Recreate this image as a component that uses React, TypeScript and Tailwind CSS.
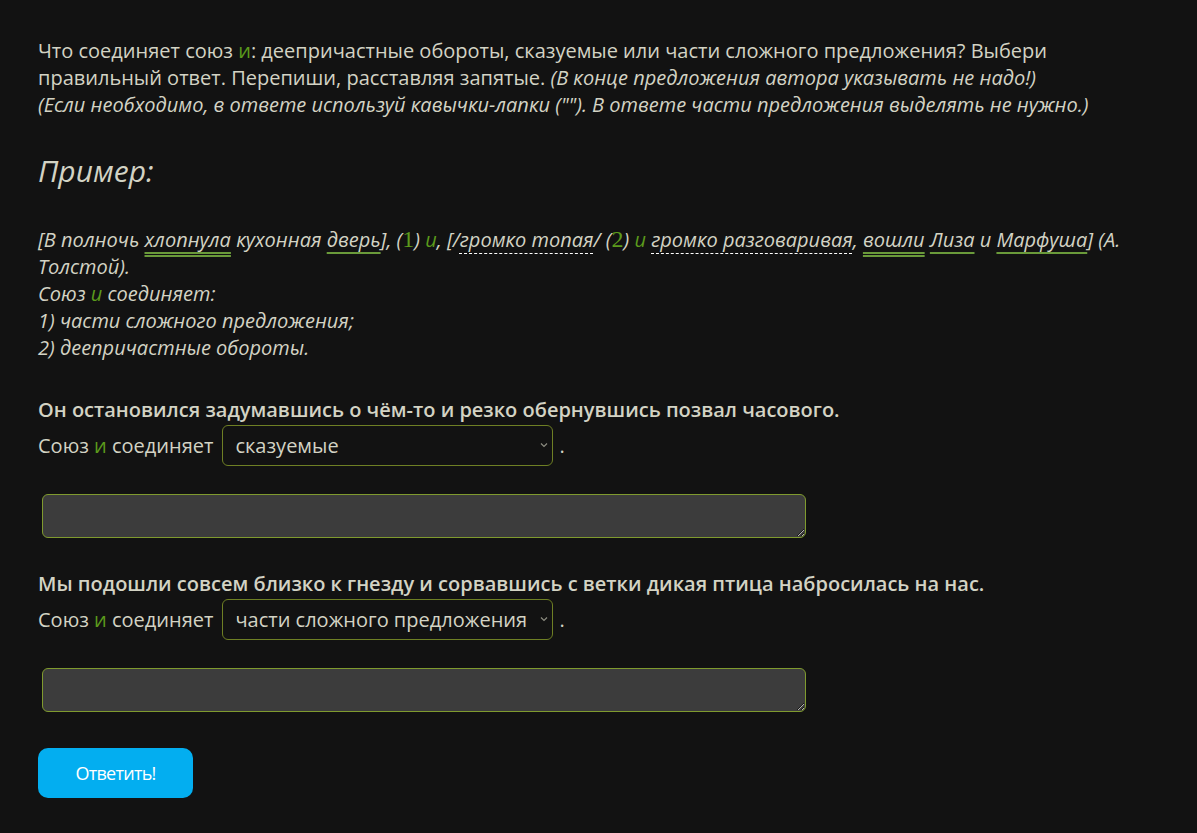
import { useState } from "react";

const G = "text-[#5b9a1c]";

function Num({ n }: { n: string }) {
  return (
    <>
      (<span className={`${G} not-italic font-['Liberation_Serif',serif] text-[24px] leading-none`}>{n}</span>)
    </>
  );
}

function Choice({ value, options }: { value: string; options: string[] }) {
  const [v, setV] = useState(value);
  return (
    <div className="relative inline-flex">
      <select
        value={v}
        onChange={(e) => setV(e.target.value)}
        className="appearance-none w-[331px] h-[41px] rounded-md border border-[#6e7f24] bg-[#121212] pl-3 pr-[16px] text-[20px] text-[#d3d3c4] outline-none"
      >
        {options.map((o) => (
          <option key={o} value={o}>
            {o}
          </option>
        ))}
      </select>
      <svg
        className="pointer-events-none absolute right-[5px] top-[17px]"
        width="8"
        height="6"
        viewBox="0 0 8 6"
        fill="none"
        stroke="#8c8c80"
        strokeWidth="1.2"
      >
        <path d="M1 1.5 L4 4.5 L7 1.5" />
      </svg>
    </div>
  );
}

const OPTIONS = ["", "деепричастные обороты", "сказуемые", "части сложного предложения"];

function Task({ sentence, value }: { sentence: string; value: string }) {
  return (
    <div className="flex flex-col">
      <p className="font-semibold">{sentence}</p>
      <div className="flex items-center mt-[2px]">
        <span>
          Союз <span className={G}>и</span> соединяет
        </span>
        <span className="ml-[9px]">
          <Choice value={value} options={OPTIONS} />
        </span>
        <span className="ml-[6px]">.</span>
      </div>
      <textarea className="mt-[28px] ml-[4px] w-[764px] h-[44px] rounded-md border border-[#7f9a2e] bg-[#3c3c3c] resize-y outline-none" />
    </div>
  );
}

export default function App() {
  return (
    <div className="min-h-screen bg-[#121212] text-[#d3d3c4] font-['Open_Sans',sans-serif] text-[20px] leading-[27px]">
      <div className="pl-[38px] pt-[37px] pb-[36px] w-[1138px]">
        <p>
          Что соединяет союз <span className={G}>и</span>: деепричастные обороты, сказуемые или части сложного
          предложения? Выбери правильный ответ. Перепиши, расставляя запятые.{" "}
          <i>(В конце предложения автора указывать не надо!)</i>
          <br />
          <i>
            (Если необходимо, в ответе используй кавычки-лапки (""). В ответе части предложения выделять не нужно.)
          </i>
        </p>

        <h2 className="mt-[35px] italic text-[30px] leading-[36px]">Пример:</h2>

        <div className="mt-[37px] italic">
          <p>
            [В полночь{" "}
            <span className="underline decoration-double decoration-[#6a9a3a] underline-offset-[5px]">хлопнула</span>{" "}
            кухонная{" "}
            <span className="underline decoration-[#6a9a3a] underline-offset-[5px]">дверь</span>], <Num n="1" />{" "}
            <span className={G}>и</span>, [/
            <span className="underline decoration-dashed decoration-white decoration-1 underline-offset-[6px]">
              громко топая
            </span>
            / <Num n="2" /> <span className={G}>и</span>{" "}
            <span className="underline decoration-dashed decoration-white decoration-1 underline-offset-[6px]">
              громко разговаривая
            </span>
            ,{" "}
            <span className="underline decoration-double decoration-[#6a9a3a] underline-offset-[5px]">вошли</span>{" "}
            <span className="underline decoration-[#6a9a3a] underline-offset-[5px]">Лиза</span> и{" "}
            <span className="underline decoration-[#6a9a3a] underline-offset-[5px]">Марфуша</span>] (А. Толстой).
          </p>
          <p>
            Союз <span className={G}>и</span> соединяет:
          </p>
          <p>1) части сложного предложения;</p>
          <p>2) деепричастные обороты.</p>
        </div>

        <div className="mt-[35px]">
          <Task sentence="Он остановился задумавшись о чём-то и резко обернувшись позвал часового." value="сказуемые" />
        </div>
        <div className="mt-[32px]">
          <Task
            sentence="Мы подошли совсем близко к гнезду и сорвавшись с ветки дикая птица набросилась на нас."
            value="части сложного предложения"
          />
        </div>

        <button className="mt-[36px] w-[155px] h-[50px] rounded-[10px] bg-[#03aef0] text-white text-[18px] tracking-[-0.04em]">
          Ответить!
        </button>
      </div>
    </div>
  );
}
